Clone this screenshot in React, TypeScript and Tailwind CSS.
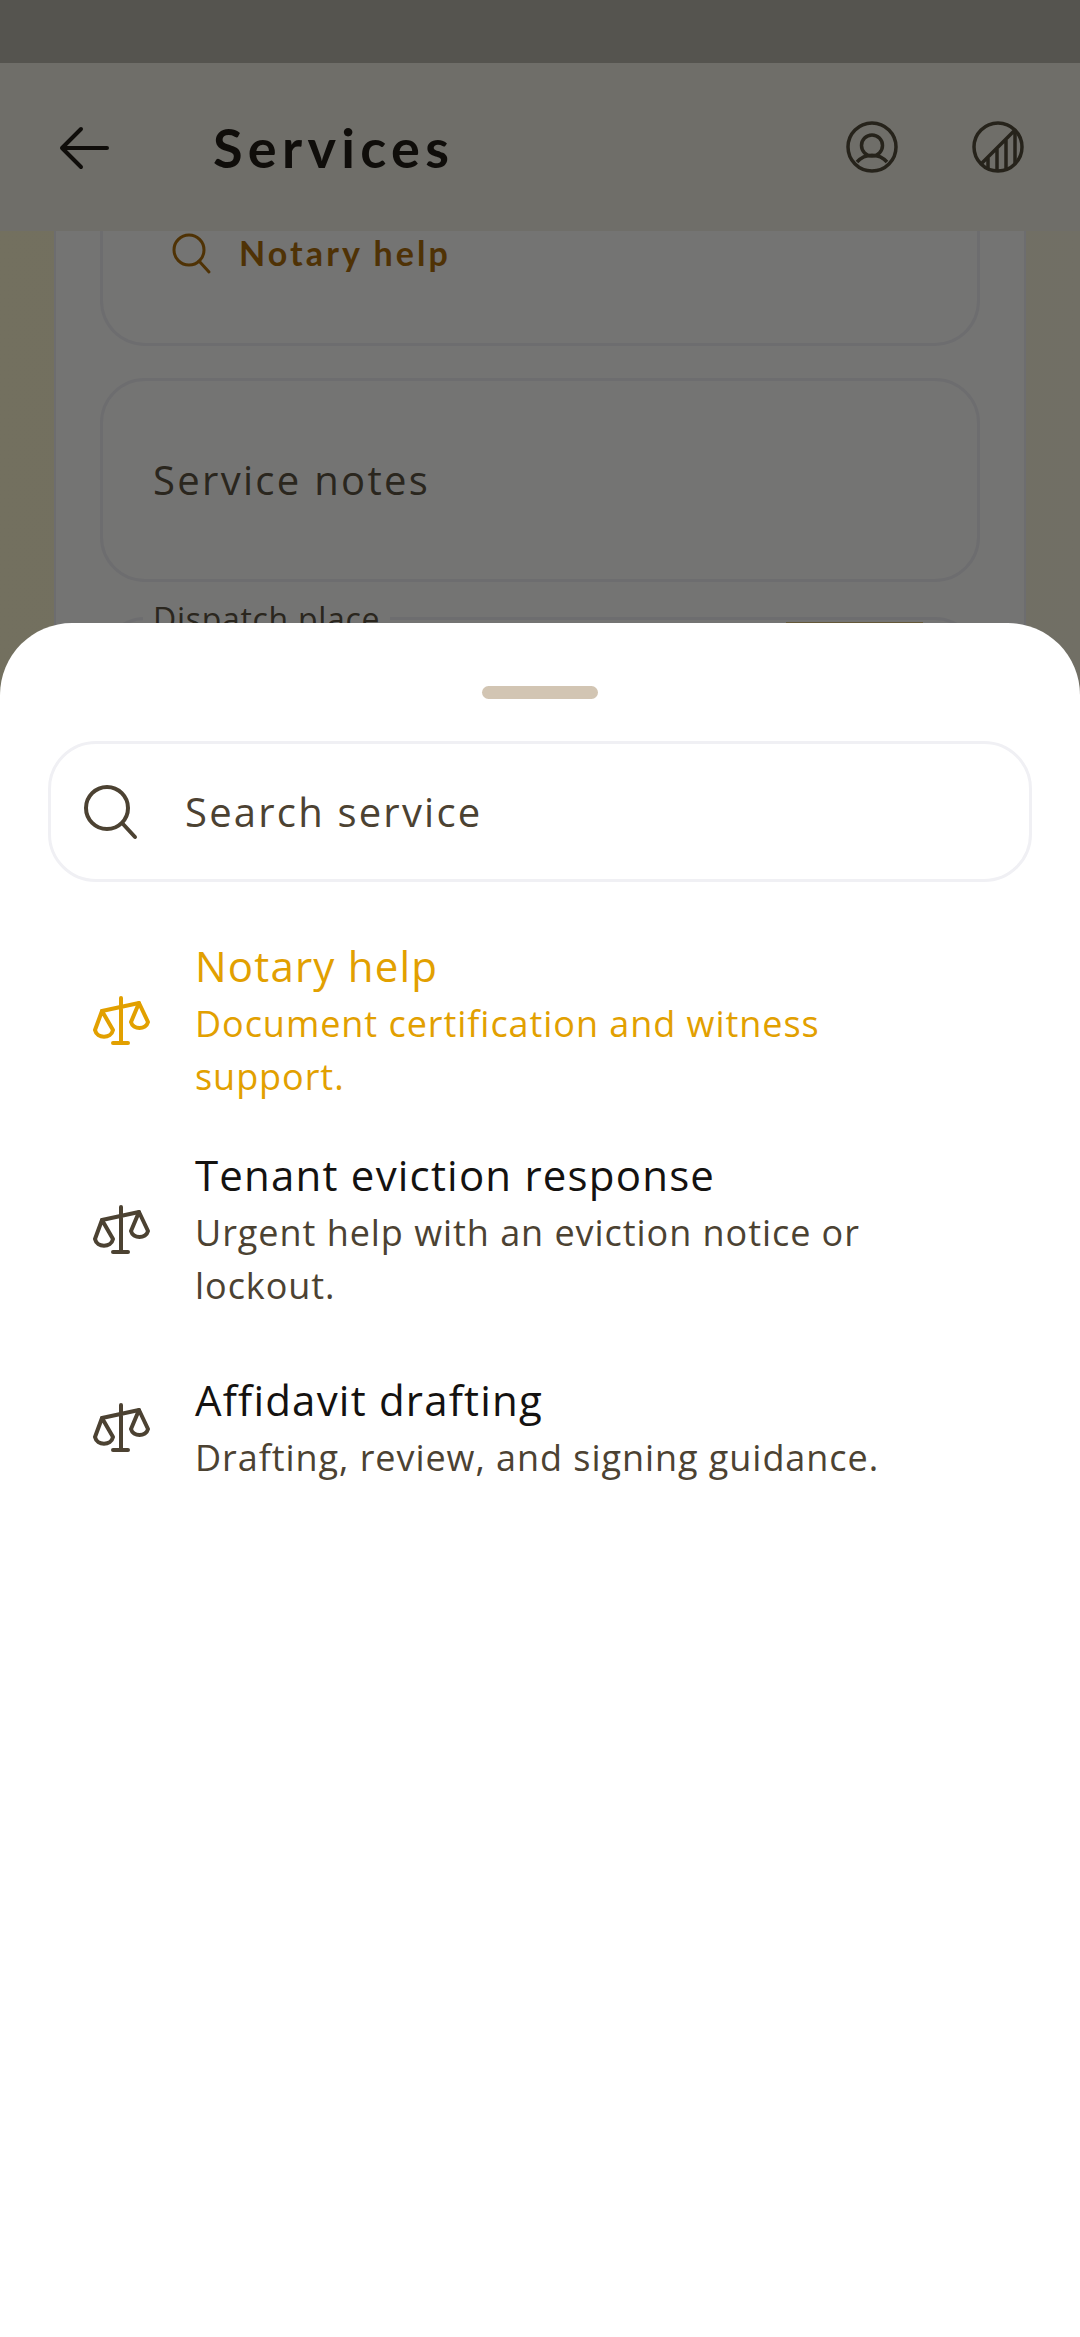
import React from 'react';

const sans = { fontFamily: '"Open Sans", sans-serif' };

function ScaleIcon({ color }: { color: string }) {
  return (
    <svg width="64" height="64" viewBox="0 0 64 64" fill="none" stroke={color} strokeWidth="4" strokeLinecap="round" strokeLinejoin="round" className="shrink-0">
      <path d="M32 9V54M24 54H39M13 22L50 14" />
      <path d="M13 22L6 41C8 50 22 50 24 41ZM50 14L42 33C44 41 57 41 59 33Z" />
    </svg>
  );
}

const services = [
  { title: 'Notary help', desc: 'Document certification and witness support.', active: true },
  { title: 'Tenant eviction response', desc: 'Urgent help with an eviction notice or lockout.', active: false },
  { title: 'Affidavit drafting', desc: 'Drafting, review, and signing guidance.', active: false },
];

export default function App() {
  return (
    <div className="relative h-[2337px] w-[1080px] overflow-hidden bg-linear-to-r from-[#e6e0be] to-[#e2deca]" style={sans}>
      {/* page behind the sheet */}
      <div className="h-[63px] bg-[#aaa89e]" />
      <header className="relative z-10 flex h-[168px] items-center bg-[#dedcd2]">
        <svg width="64" height="64" viewBox="0 0 64 64" fill="none" stroke="#1e1b14" strokeWidth="4" strokeLinecap="round" strokeLinejoin="round" className="ml-[53px] mt-[2px]">
          <path d="M9 32H54M28 13L9 32L28 51" />
        </svg>
        <h1 className="ml-[96px] text-[54px] font-bold tracking-[5.3px] text-[#1e1a14]" style={{ fontFamily: 'Lato, sans-serif' }}>Services</h1>
        <svg width="64" height="64" viewBox="0 0 64 64" fill="none" stroke="#4c4636" strokeWidth="3.5" className="ml-auto">
          <circle cx="32" cy="32" r="24" />
          <circle cx="32" cy="30.5" r="10.5" />
          <path d="M17 47C25 38 39 38 47 47" />
        </svg>
        <svg width="64" height="64" viewBox="0 0 64 64" fill="none" stroke="#4c4636" strokeWidth="3.5" className="ml-[62px] mr-[50px]">
          <circle cx="32" cy="32" r="24" />
          <path d="M15 49L49 15M22 43V53M31 34V56M40 25V54M49 16V49" />
        </svg>
      </header>

      <main className="mx-[54px] -mt-[8px] h-[500px] border-x-2 border-[#dadade] bg-[#e8e8e6] px-[44px]">
        <div className="flex h-[123px] items-start rounded-b-[45px] border-x-[3px] border-b-[3px] border-[#dadade] pl-[66px] pt-[7px]">
          <svg width="44" height="44" viewBox="0 0 44 44" fill="none" stroke="#9e640a" strokeWidth="3" strokeLinecap="round" className="mt-[2px]">
            <circle cx="20" cy="18" r="15" />
            <path d="M30 29L40 40" />
          </svg>
          <span className="ml-[26px] text-[34px] font-bold tracking-[3.1px] text-[#9e640a] -mt-[3px]" style={{ fontFamily: 'Lato, sans-serif' }}>Notary help</span>
        </div>
        <div className="mt-[32px] flex h-[204px] items-center rounded-[45px] border-[3px] border-[#dadade] pl-[50px] text-[40px] tracking-[2.3px] text-[#544c3c]">Service notes</div>
        <div className="relative mt-[35px] h-[100px] rounded-t-[45px] border-x-[3px] border-t-[3px] border-[#dadade]">
          <span className="absolute -top-[25px] left-[40px] bg-[#e8e8e6] px-[10px] text-[32px] tracking-[0.7px] text-[#544c3c]">Dispatch place</span>
          <div className="absolute left-[683px] top-[2px] h-[4px] w-[137px] bg-[#c8b070]" />
        </div>
      </main>

      {/* scrim */}
      <div className="absolute inset-0 z-20 bg-black/50" />

      {/* bottom sheet */}
      <section className="absolute inset-x-0 bottom-0 top-[623px] z-30 rounded-t-[72px] bg-white">
        <div className="mx-auto mt-[63px] h-[13px] w-[116px] rounded-full bg-[#d2c5b3]" />
        <div className="mx-[48px] mt-[42px] flex h-[141px] items-center rounded-[48px] border-[3px] border-[#f0f0f4] pl-[31px]">
          <svg width="56" height="60" viewBox="0 0 56 60" fill="none" stroke="#4c4232" strokeWidth="4" strokeLinecap="round" className="mt-[2px]">
            <circle cx="25" cy="25" r="21" />
            <path d="M41 41L53 54" />
          </svg>
          <span className="ml-[47px] text-[40px] tracking-[2.2px] text-[#4c4232]">Search service</span>
        </div>
        <ul className="mt-[34px]">
          {services.map((s) => (
            <li key={s.title} className="flex min-h-[188px] items-center py-[18px] pl-[89px] pr-[130px]">
              <ScaleIcon color={s.active ? '#e2a000' : '#4c4232'} />
              <div className="mb-[4px] ml-[42px]">
                <div className={`text-[42px] leading-[63px] tracking-[1.2px] ${s.active ? 'text-[#e2a000]' : 'text-[#141210]'}`}>{s.title}</div>
                <div className={`text-[36px] leading-[53px] tracking-[0.95px] ${s.active ? 'text-[#e2a000]' : 'text-[#4c4232]'}`}>{s.desc}</div>
              </div>
            </li>
          ))}
        </ul>
      </section>
    </div>
  );
}
